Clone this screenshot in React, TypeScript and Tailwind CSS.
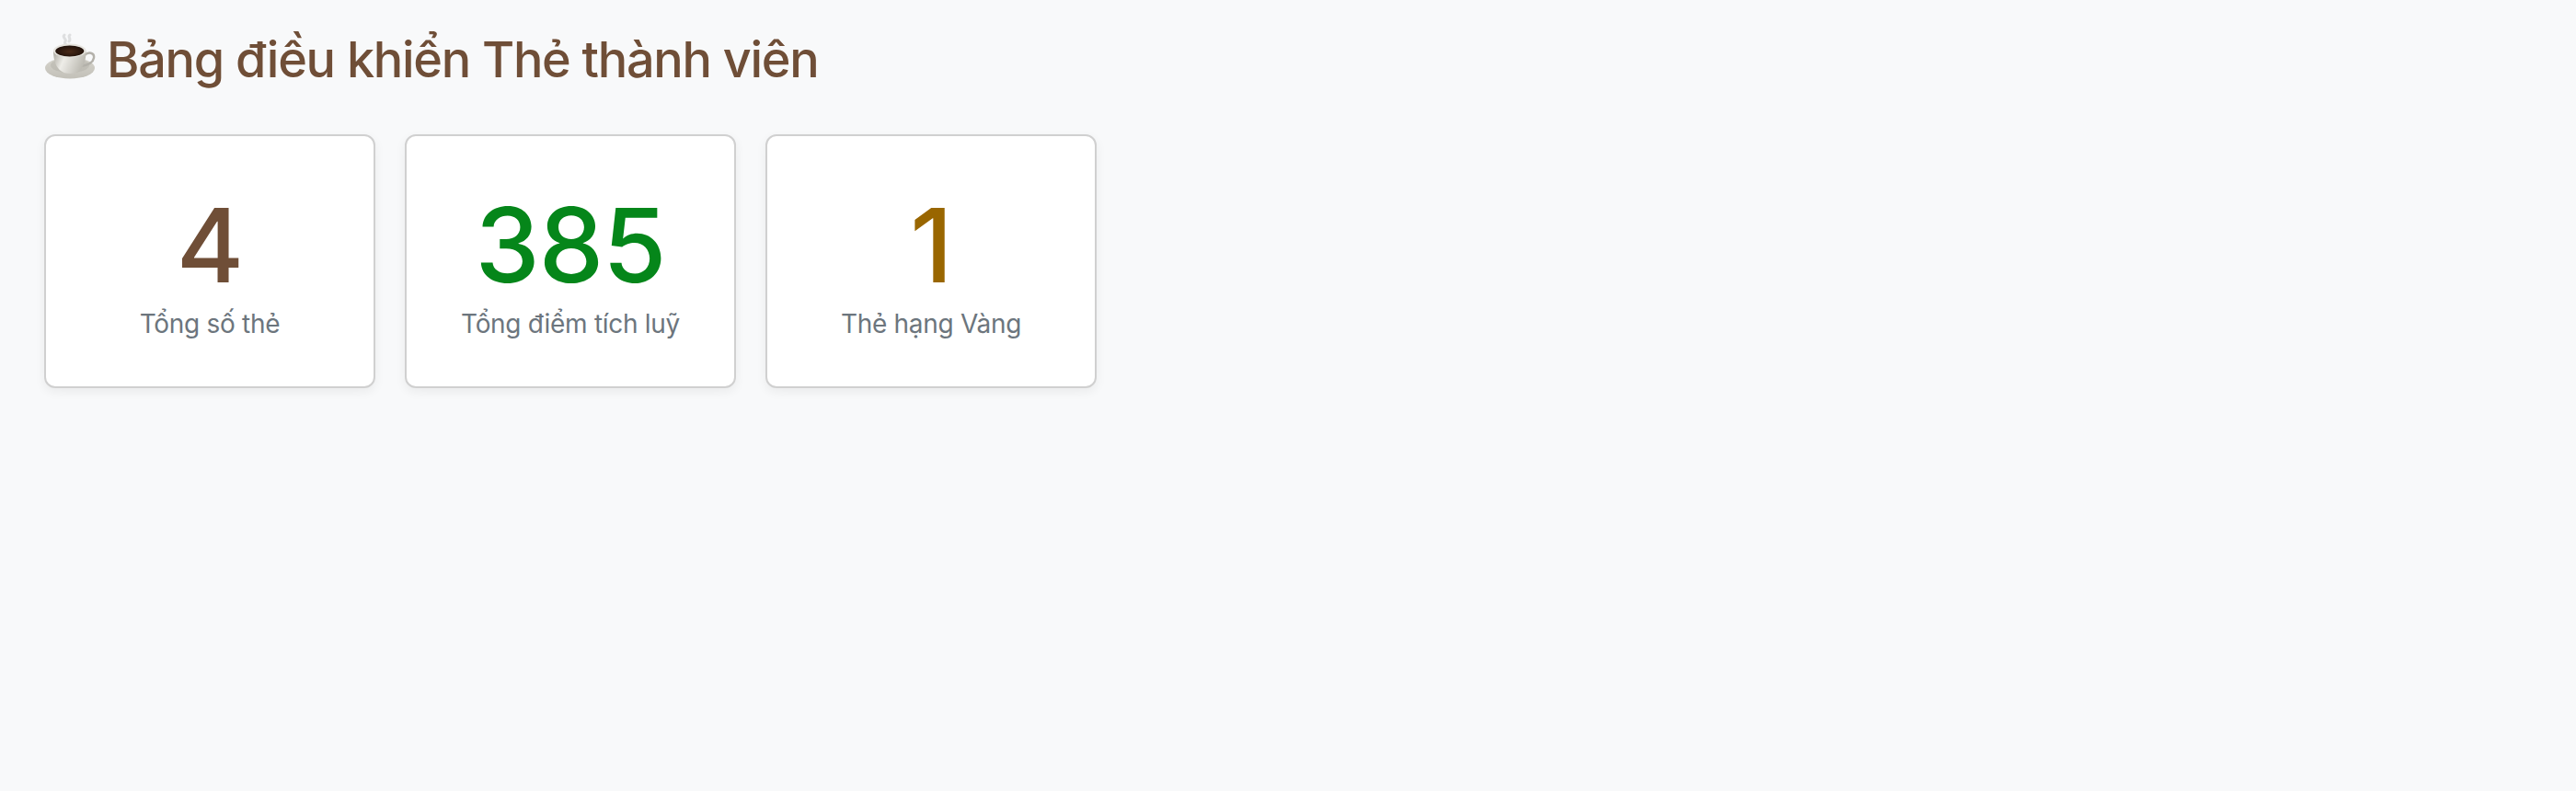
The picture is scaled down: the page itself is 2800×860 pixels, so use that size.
const stats = [
  { value: "4", label: "Tổng số thẻ", color: "text-[#6f4e37]" },
  { value: "385", label: "Tổng điểm tích luỹ", color: "text-[#05861a]" },
  { value: "1", label: "Thẻ hạng Vàng", color: "text-[#996600]" },
];

function CoffeeCup() {
  return (
    <svg width="56" height="56" viewBox="0 0 56 56" className="shrink-0">
      <defs>
        <linearGradient id="cup" x1="0" y1="0" x2="1" y2="0.3">
          <stop offset="0" stopColor="#a8a59c" />
          <stop offset="0.4" stopColor="#eeede8" />
          <stop offset="1" stopColor="#bdbbb3" />
        </linearGradient>
        <radialGradient id="coffee" cx="0.5" cy="0.55" r="0.6">
          <stop offset="0" stopColor="#4a2a18" />
          <stop offset="1" stopColor="#1a0e09" />
        </radialGradient>
        <linearGradient id="saucer" x1="0" y1="0" x2="0" y2="1">
          <stop offset="0" stopColor="#d6d4cc" />
          <stop offset="1" stopColor="#c2c0b8" />
        </linearGradient>
      </defs>
      {/* steam */}
      <path d="M22 2c-3 3 3 4 1 7s2 3 1 5M28 2c-3 2 2 4-1 7" fill="none" stroke="#d9dadb" strokeWidth="3" strokeLinecap="round" opacity="0.85" />
      {/* saucer */}
      <ellipse cx="28" cy="38" rx="27" ry="11.5" fill="url(#saucer)" />
      <ellipse cx="28" cy="35" rx="21" ry="8" fill="#b4b2aa" opacity="0.5" />
      {/* handle */}
      <path d="M44 24c4-4 11-3 10 3s-8 8-14 9" fill="none" stroke="#b3b1aa" strokeWidth="2.4" />
      {/* cup */}
      <path d="M10 19c0 14 5 25 18 25s17.500-11 17.500-25z" fill="url(#cup)" />
      <ellipse cx="27.750" cy="19" rx="17.750" ry="7.500" fill="#e6e4de" />
      <ellipse cx="27.750" cy="19.500" rx="15.500" ry="6" fill="url(#coffee)" />
    </svg>
  );
}

export default function App() {
  return (
    <div className="min-h-screen bg-[#f8f9fa] px-12 pt-[30px] font-['Inter',sans-serif]">
      <h1 className="flex items-center gap-3 text-[54px] leading-[68px] font-[550] tracking-[-1.3px] text-[#6f4e37]">
        <CoffeeCup />
        <span className="translate-y-[1px]">Bảng điều khiển Thẻ thành viên</span>
      </h1>
      <div className="mt-12 flex gap-8">
        {stats.map((s) => (
          <div
            key={s.label}
            className="flex h-[276px] w-[360px] flex-col items-center rounded-xl border-2 border-[#d0d0d0] bg-white pt-[54px] shadow-[0_4px_12px_rgba(0,0,0,0.06)]"
          >
            <div className={`text-[112px] leading-[128px] font-medium tracking-[-1px] ${s.color}`}>{s.value}</div>
            <div className="mt-[2px] text-[28px] leading-[40px] tracking-[-0.3px] text-[#6c757d]">{s.label}</div>
          </div>
        ))}
      </div>
    </div>
  );
}
